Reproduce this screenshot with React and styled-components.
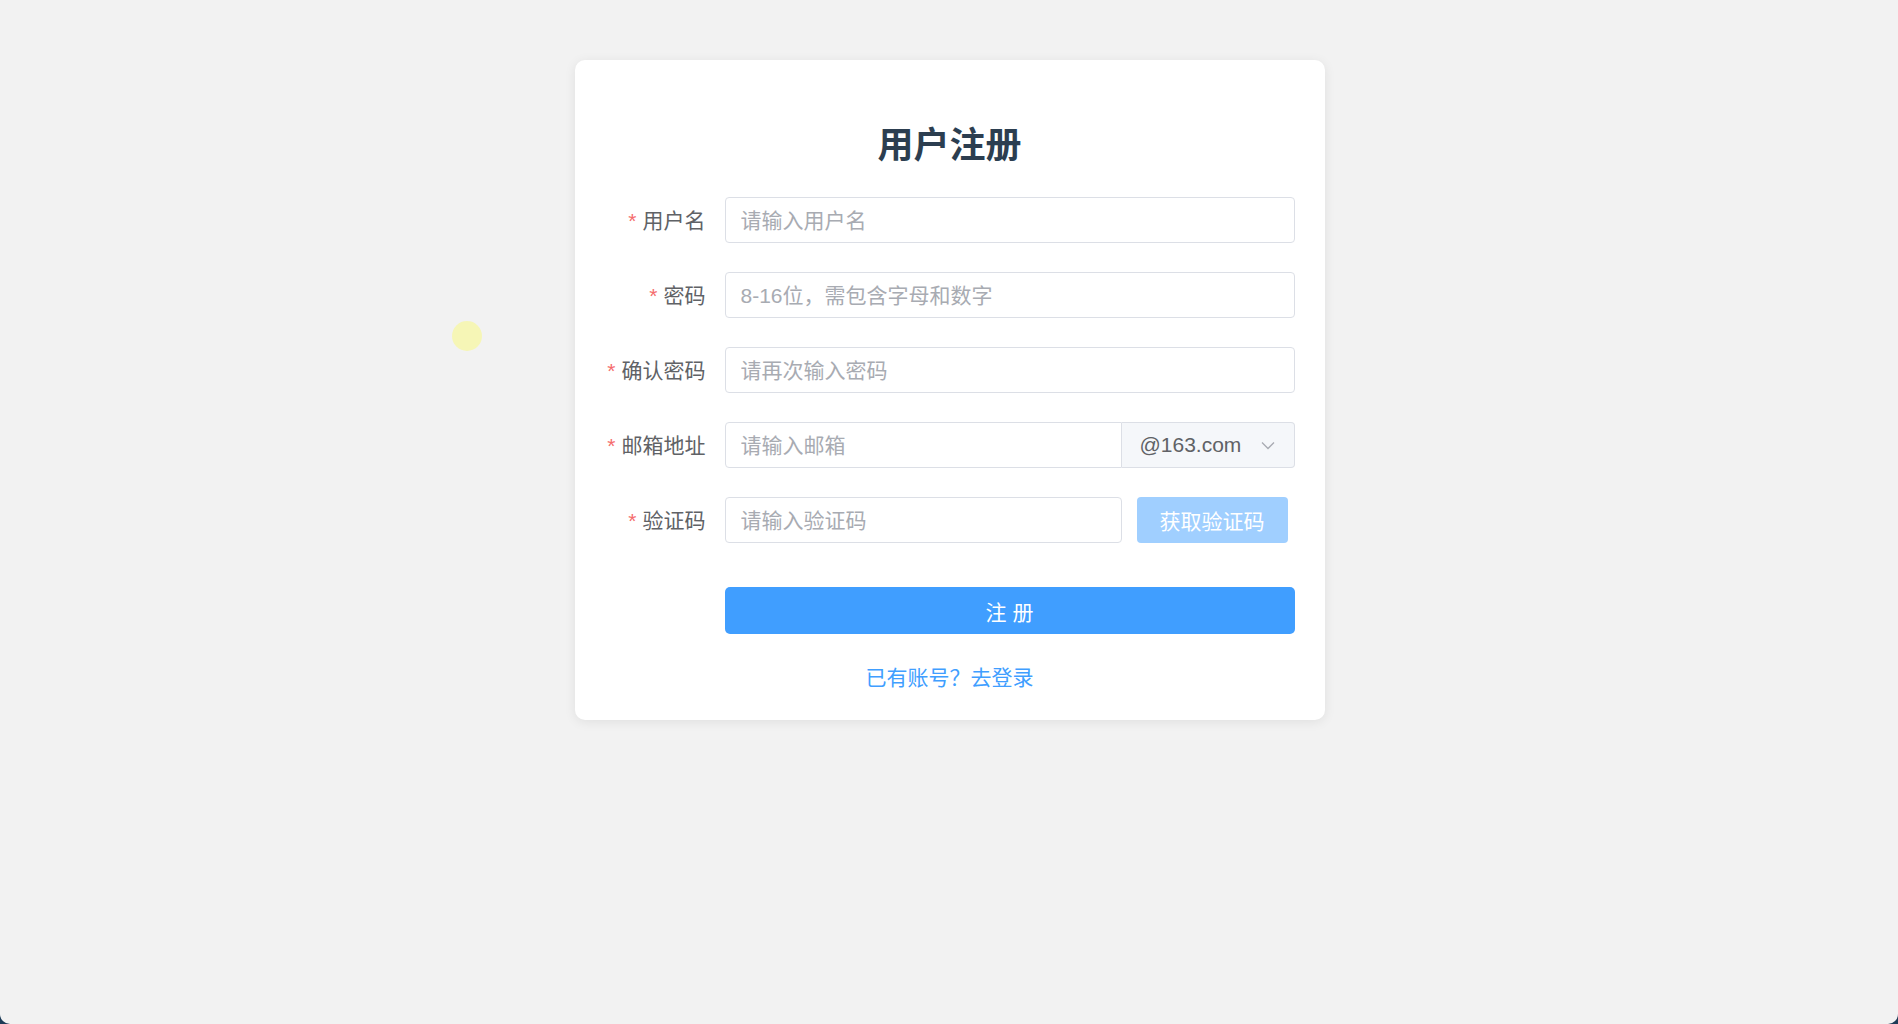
import React from 'react';
import styled, { createGlobalStyle } from 'styled-components';

const GlobalStyle = createGlobalStyle`
  html {
    background: #1d3b57;
  }
  body {
    margin: 0;
    height: 100vh;
    overflow: hidden;
    background: #f2f2f2;
    border-radius: 0 0 10px 10px;
    font-family: 'Liberation Sans', 'Noto Sans CJK SC', sans-serif;
  }
`;

const Page = styled.div`
  position: relative;
  display: flex;
  flex-direction: column;
  align-items: center;
  padding: 60px 0 0 1px;
`;

const Cursor = styled.div`
  position: absolute;
  left: 452px;
  top: 321px;
  width: 30px;
  height: 30px;
  border-radius: 50%;
  background: #f6f6b6;
`;

const Card = styled.div`
  width: 750px;
  box-sizing: border-box;
  padding: 59px 30px 26px;
  background: #fff;
  border-radius: 10px;
  box-shadow: 0 2px 12px rgba(0, 0, 0, 0.08);
`;

const Title = styled.h2`
  margin: 0 0 24px;
  font-size: 36px;
  line-height: 54px;
  font-weight: 700;
  color: #2c3e50;
  text-align: center;
`;

const Form = styled.form`
  display: flex;
  flex-direction: column;
`;

const Row = styled.div`
  display: flex;
  align-items: center;
  margin-bottom: ${(p) => (p.$last ? '44px' : '29px')};
`;

const Label = styled.label`
  width: 120px;
  flex: 0 0 120px;
  box-sizing: border-box;
  padding: 0 19px 2px 0;
  text-align: right;
  font-size: 21px;
  color: #606266;
  & span {
    color: #f56c6c;
    margin-right: 6px;
  }
`;

const Field = styled.div`
  flex: 1;
  display: flex;
  align-items: center;
`;

const Input = styled.input`
  width: ${(p) => p.$width || '100%'};
  height: 46px;
  box-sizing: border-box;
  padding: 2px 15px 0;
  border: 1px solid #dcdfe6;
  border-radius: ${(p) => (p.$joined ? '4px 0 0 4px' : '4px')};
  font-family: inherit;
  font-size: 21px;
  color: #606266;
  outline: none;
  background: #fff;
  &::placeholder {
    color: #a8abb2;
  }
`;

const Select = styled.div`
  flex: 1;
  height: 46px;
  box-sizing: border-box;
  display: flex;
  align-items: center;
  justify-content: space-between;
  padding: 0 19px 0 18px;
  border: 1px solid #dcdfe6;
  border-left: none;
  border-radius: 0 4px 4px 0;
  background: #f5f7fa;
  font-size: 21px;
  color: #606266;
`;

const CodeButton = styled.button`
  margin-left: 15px;
  height: 46px;
  padding: 0 23px;
  border: none;
  border-radius: 4px;
  background: #a0cfff;
  color: #fff;
  font-family: inherit;
  font-size: 21px;
`;

const Submit = styled.button`
  width: 100%;
  height: 47px;
  border: none;
  border-radius: 5px;
  background: #409eff;
  color: #fff;
  font-family: inherit;
  font-size: 21px;
`;

const LoginLink = styled.a`
  display: block;
  margin-top: 28px;
  text-align: center;
  font-size: 21px;
  line-height: 32px;
  color: #409eff;
  text-decoration: none;
`;

const Chevron = () => (
  <svg width="14" height="9" viewBox="0 0 14 9" fill="none">
    <path d="M1 1.5l6 6 6-6" stroke="#a8abb2" strokeWidth="1.3" />
  </svg>
);

const fields = [
  { label: '用户名', placeholder: '请输入用户名' },
  { label: '密码', placeholder: '8-16位，需包含字母和数字' },
  { label: '确认密码', placeholder: '请再次输入密码' },
];

const App = () => {
  return (
    <>
      <GlobalStyle />
      <Page>
        <Cursor />
        <Card>
          <Title>用户注册</Title>
          <Form>
            {fields.map((f) => (
              <Row key={f.label}>
                <Label>
                  <span>*</span>
                  {f.label}
                </Label>
                <Field>
                  <Input placeholder={f.placeholder} />
                </Field>
              </Row>
            ))}
            <Row>
              <Label>
                <span>*</span>邮箱地址
              </Label>
              <Field>
                <Input $width="397px" $joined placeholder="请输入邮箱" />
                <Select>
                  @163.com
                  <Chevron />
                </Select>
              </Field>
            </Row>
            <Row $last>
              <Label>
                <span>*</span>验证码
              </Label>
              <Field>
                <Input $width="397px" placeholder="请输入验证码" />
                <CodeButton type="button">获取验证码</CodeButton>
              </Field>
            </Row>
            <Row style={{ marginBottom: 0 }}>
              <Label />
              <Field>
                <Submit type="button">注 册</Submit>
              </Field>
            </Row>
          </Form>
          <LoginLink href="#">已有账号？去登录</LoginLink>
        </Card>
      </Page>
    </>
  );
};

export default App;
